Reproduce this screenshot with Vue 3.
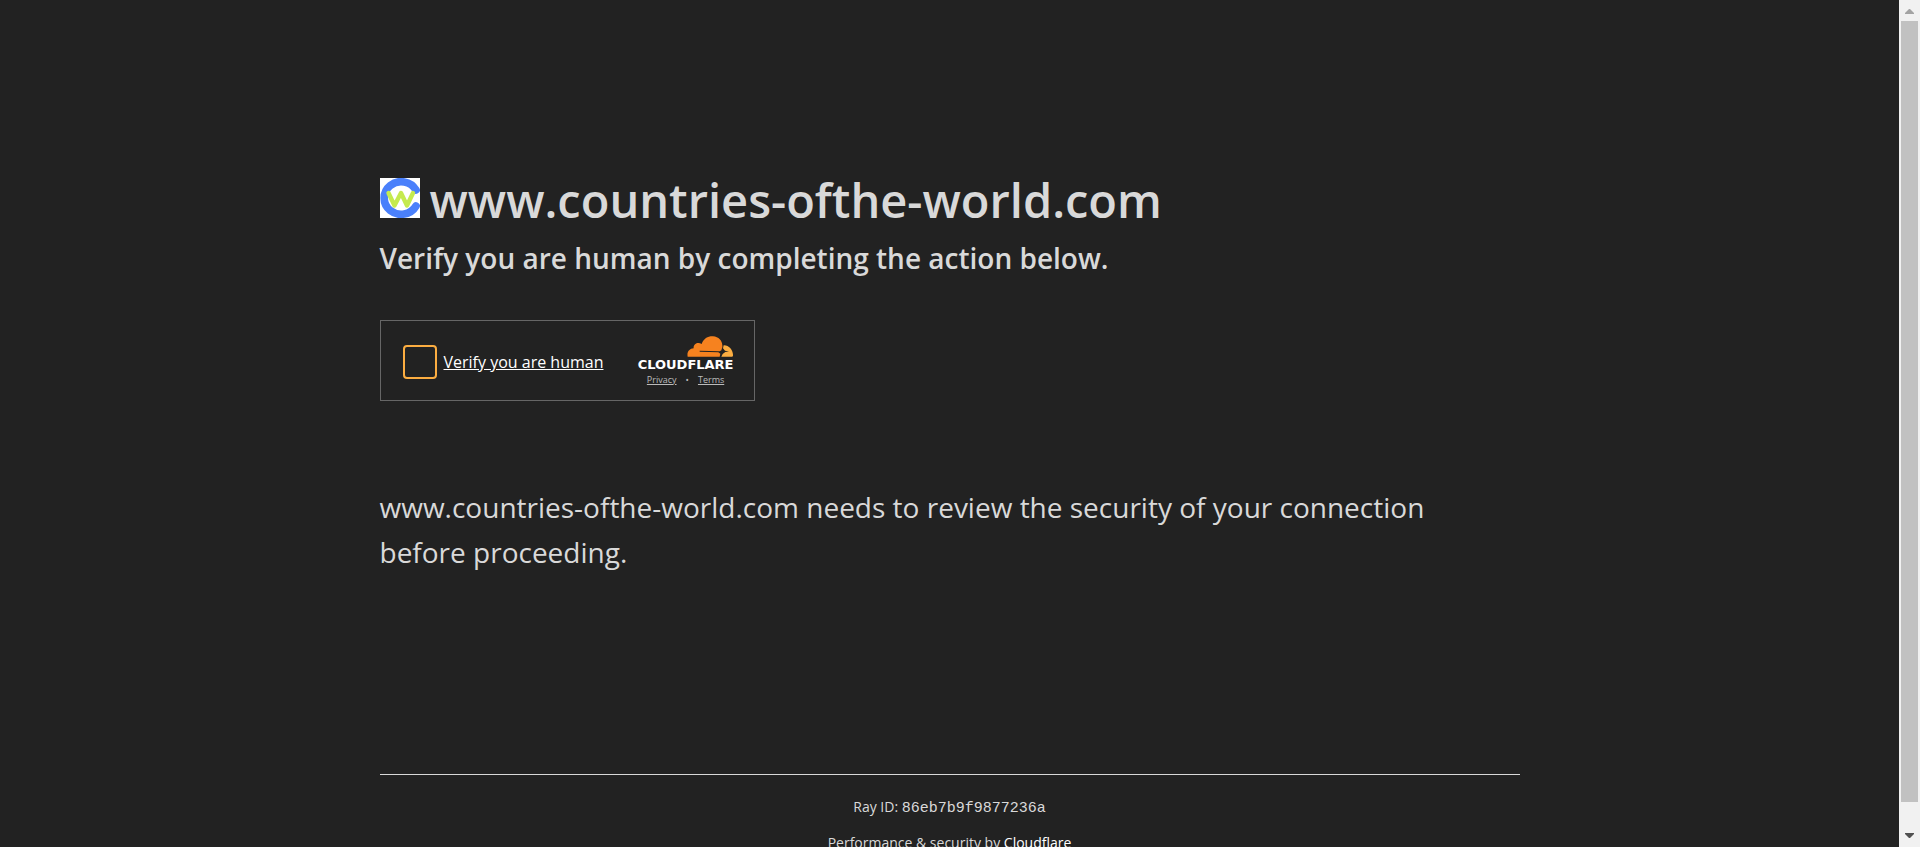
<script setup>
const host = 'www.countries-ofthe-world.com'
const rayId = '86eb7b9f9877236a'
</script>

<template>
  <div class="window">
    <div class="page">
      <main class="main">
        <h1 class="title">
          <svg class="favicon" viewBox="0 0 40 40" aria-hidden="true">
            <rect width="40" height="40" fill="#fff" />
            <path d="M36 12A17 16.300 0 1 0 36 28" fill="none" stroke="#4a80fb" stroke-width="7.700" stroke-linecap="round" />
            <path d="M8.500 15L14.500 27.500L21 15L27 27.500L33 15" fill="none" stroke="#c5ea4f" stroke-width="4.400" stroke-linecap="round" stroke-linejoin="round" />
          </svg>
          <span>{{ host }}</span>
        </h1>
        <h2 class="subtitle">Verify you are human by completing the action below.</h2>

        <section class="widget">
          <label class="check">
            <input class="box" type="checkbox" />
            <span class="check-text">Verify you are human</span>
          </label>
          <div class="brand">
            <svg class="cloud" viewBox="0 0 138 63" aria-hidden="true">
              <path d="M2 62C-1 48 7 38 20 37C18 25 32 16 44 24C50 7 64 0 78 1C96 2 108 16 106 34L103 43L98 46L38 44.500V47.500L94 49L100 53L98 62Z" fill="#f6821f" />
              <path d="M110 28C126 27 139 43 138 59L136 62H103L107 54L115 48L126 46.500L114 44L108 37Z" fill="#fbad41" />
            </svg>
            <span class="wordmark">CLOUDFLARE</span>
            <div class="legal">
              <a href="#privacy">Privacy</a>
              <span>•</span>
              <a href="#terms">Terms</a>
            </div>
          </div>
        </section>

        <p class="message">{{ host }} needs to review the security of your connection before proceeding.</p>
      </main>

      <footer class="footer">
        <div class="footer-inner">
          <div>Ray ID: <code>{{ rayId }}</code></div>
          <div>Performance &amp; security by <a href="#cloudflare">Cloudflare</a></div>
        </div>
      </footer>
    </div>

    <div class="scrollbar">
      <button class="arrow" type="button" aria-label="Scroll up">
        <svg viewBox="0 0 9 5" aria-hidden="true"><path d="M0 5V4L4 0H5L9 4V5Z" fill="#a3a3a3" /></svg>
      </button>
      <div class="thumb"></div>
      <button class="arrow down" type="button" aria-label="Scroll down">
        <svg viewBox="0 0 9 5" aria-hidden="true"><path d="M0 0V1L4 5H5L9 1V0Z" fill="#505050" /></svg>
      </button>
    </div>
  </div>
</template>

<style>
body {
  margin: 0;
  background: #222;
}
</style>

<style scoped>
.window {
  display: grid;
  grid-template-columns: 1fr 21px;
  height: 100vh;
  overflow: hidden;
  background: #222;
  color: #d9d9d9;
  font-family: "Open Sans", "Noto Sans", sans-serif;
}
.page {
  display: flex;
  flex-direction: column;
  overflow: hidden;
}
.main,
.footer {
  box-sizing: border-box;
  width: 100%;
  max-width: 1200px;
  margin: 0 auto;
  padding: 0 30px;
}
.main {
  padding-top: 160px;
}
.title {
  display: flex;
  align-items: flex-start;
  gap: 10px;
  margin: 0;
  font-size: 47px;
  font-weight: 600;
  line-height: 80px;
}
.favicon {
  width: 40px;
  height: 40px;
  margin-top: 18px;
}
.subtitle {
  margin: -4px 0 0;
  font-size: 28px;
  font-weight: 600;
  line-height: 44px;
}
.widget {
  box-sizing: border-box;
  display: flex;
  align-items: center;
  justify-content: space-between;
  width: 375px;
  height: 81px;
  margin-top: 40px;
  padding: 2px 20px 0 22px;
  border: 1px solid #666;
}
.check {
  display: flex;
  align-items: center;
  gap: 7px;
  color: #fff;
  font-size: 16px;
  line-height: 24px;
}
.box {
  appearance: none;
  box-sizing: border-box;
  width: 34px;
  height: 34px;
  margin: 0;
  border: 2px solid #fbad41;
  border-radius: 4px;
}
.check-text {
  text-decoration: underline;
}
.brand {
  display: flex;
  flex-direction: column;
  align-items: flex-end;
}
.cloud {
  width: 46px;
  height: 21px;
  margin-right: 1px;
}
.wordmark {
  color: #fff;
  font-family: "DejaVu Sans", sans-serif;
  font-size: 13px;
  font-weight: 700;
  line-height: 15px;
}
.legal {
  display: flex;
  justify-content: center;
  gap: 9px;
  width: 100%;
  color: #bbb;
  font-size: 9px;
  line-height: 16px;
}
.legal a {
  color: inherit;
}
.message {
  margin: 84px 0 0;
  padding-right: 40px;
  font-size: 28px;
  line-height: 45px;
}
.footer {
  margin-top: 199px;
  font-size: 14px;
}
.footer-inner {
  padding-top: 20px;
  border-top: 1px solid #d9d9d9;
  text-align: center;
  line-height: 24px;
}
.footer-inner div + div {
  margin-top: 10px;
}
.footer code {
  font-family: "Liberation Mono", monospace;
  font-size: 15px;
}
.footer a {
  color: #fff;
  text-decoration: none;
}
.scrollbar {
  display: flex;
  flex-direction: column;
  background: #f1f1f1;
}
.arrow {
  display: flex;
  align-items: center;
  justify-content: center;
  height: 21px;
  padding: 2px 0 0;
  border: 0;
  background: transparent;
}
.arrow.down {
  padding: 0 0 2px;
}
.arrow svg {
  width: 9px;
  height: 5px;
}
.thumb {
  flex: 1;
  margin: 0 2px 24px;
  background: #c1c1c1;
}
</style>
